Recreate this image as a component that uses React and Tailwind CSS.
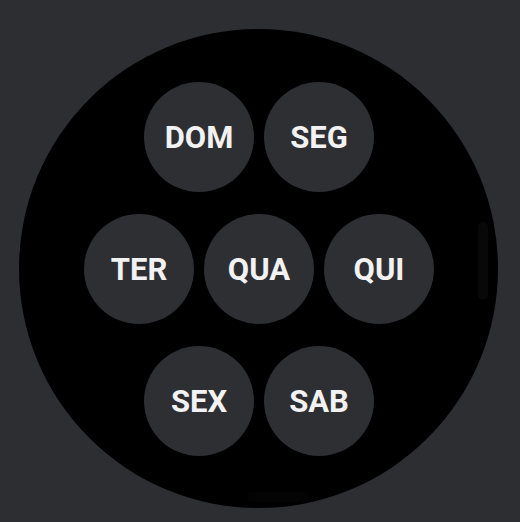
export default function App() {
  const rows = [["DOM", "SEG"], ["TER", "QUA", "QUI"], ["SEX", "SAB"]];
  return (
    <div className="w-[520px] h-[522px] bg-[#2d2e32] pt-[29px] pl-[19px]" style={{ fontFamily: "Roboto, 'Liberation Sans', sans-serif" }}>
      <div className="relative w-[479px] h-[479px] rounded-full bg-black flex flex-col items-center justify-center gap-[22px] pl-px">
        {rows.map((row, i) => (
          <div key={i} className="flex gap-[10px]">
            {row.map((d) => (
              <div key={d} className="w-[110px] h-[110px] rounded-full bg-[#2e2f33] flex items-center justify-center pt-[2px]">
                <span className="text-[31px] font-bold text-[#f2f2f2] leading-none">{d}</span>
              </div>
            ))}
          </div>
        ))}
        <div className="absolute left-[459px] top-[193px] w-[10px] h-[78px] rounded-full bg-[#080808]" />
        <div className="absolute left-[228px] top-[463px] w-[62px] h-[10px] rounded-sm bg-[#030303]" />
      </div>
    </div>
  );
}
